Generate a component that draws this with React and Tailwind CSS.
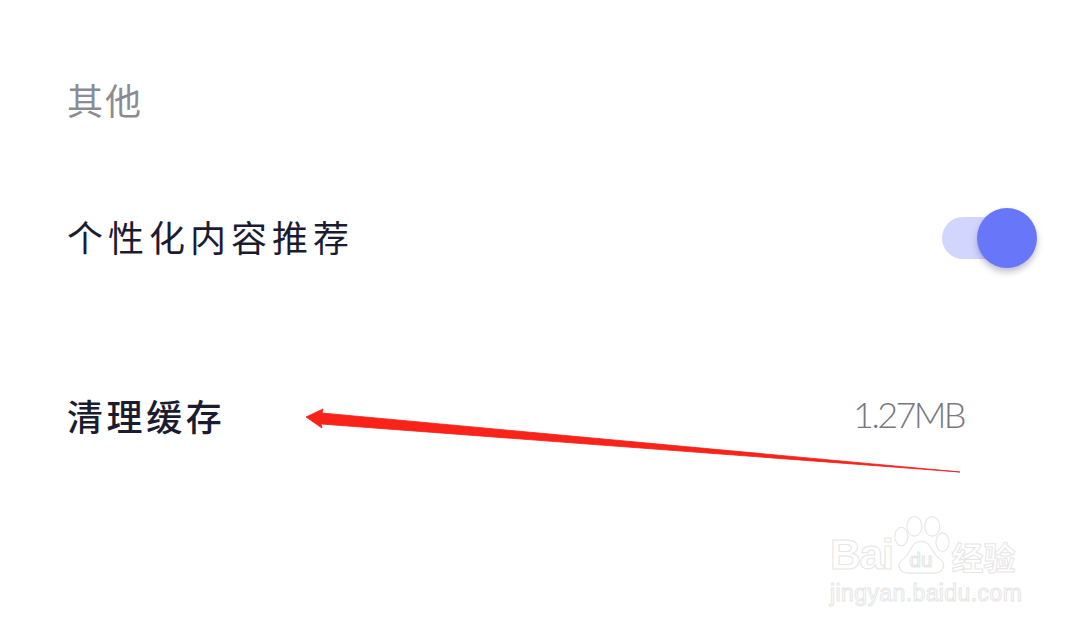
import React from "react";

const cjk = { fontFamily: '"Noto Sans CJK SC", "Noto Sans", sans-serif' };
const latin = { fontFamily: '"Liberation Sans", sans-serif' };

function Toggle() {
  return (
    <div className="flex items-center">
      <div className="w-[70px] h-[42px] rounded-full bg-[#d2d5fd]" />
      <div className="-ml-[35px] w-[60px] h-[60px] rounded-full bg-[#6877f9] shadow-[0_4px_6px_rgba(70,70,110,0.35)]" />
    </div>
  );
}

function Arrow() {
  return (
    <svg className="absolute left-0 top-0" width="1080" height="630" viewBox="0 0 1080 630">
      <path d="M306 417 L323 409 L322 413 L960 472 L321 424 L322 428 Z" fill="#f9231a" stroke="#f0201a" strokeWidth="0.8" />
    </svg>
  );
}

function Paw() {
  return (
    <svg width="58" height="62" viewBox="0 0 62 62" fill="#fff" stroke="#e6e6e6" strokeWidth="1.2" className="shrink-0">
      <ellipse cx="10" cy="22" rx="7" ry="10" />
      <ellipse cx="24" cy="11" rx="8" ry="10.5" />
      <ellipse cx="43" cy="11" rx="8" ry="10.5" />
      <ellipse cx="54" cy="28" rx="7" ry="10" />
      <path d="M31 27 C42 27 42 39 50 45 C60 52 54 61 45 61 L18 61 C8 61 3 52 13 45 C21 39 20 27 31 27 Z" />
      <text x="31" y="55" textAnchor="middle" fontSize="22" fontFamily="Liberation Sans, sans-serif">du</text>
    </svg>
  );
}

function Watermark() {
  return (
    <div className="absolute left-[830px] top-[514px] w-[194px] flex flex-col">
      <div className="flex items-end whitespace-nowrap">
        <span className="text-[43px] leading-[44px] font-bold tracking-[-1.5px] text-white [-webkit-text-stroke:1px_#e6e6e6]" style={latin}>
          Bai
        </span>
        <Paw />
        <span className="ml-[1px] text-[32px] leading-[40px] font-bold text-white [-webkit-text-stroke:1px_#e6e6e6]" style={cjk}>
          经验
        </span>
      </div>
      <span className="mt-[3px] text-[23px] leading-[28px] tracking-[0.4px] whitespace-nowrap text-white [-webkit-text-stroke:1px_#e6e6e6]" style={latin}>
        jingyan.baidu.com
      </span>
    </div>
  );
}

export default function App() {
  return (
    <div className="relative w-[1080px] h-[630px] overflow-hidden bg-white pl-[67px] pr-[43px] pt-[74px]" style={cjk}>
      <h3 className="h-[50px] text-[36px] leading-[50px] tracking-[2px] font-normal text-[#8b8b93]">其他</h3>
      <div className="mt-[84px] h-[60px] flex items-center justify-between">
        <span className="pb-[4px] text-[36px] tracking-[5px] text-[#1c1c30]">个性化内容推荐</span>
        <Toggle />
      </div>
      <div className="mt-[117px] h-[64px] flex items-center justify-between pr-[73px]">
        <span className="pb-[4px] text-[36px] tracking-[3.6px] font-medium text-[#1c1c30]">清理缓存</span>
        <span className="pb-[6px] text-[36px] tracking-[-2.6px] font-light text-[#77777d]" style={{ fontFamily: '"Lato", sans-serif' }}>1.27MB</span>
      </div>
      <Arrow />
      <Watermark />
    </div>
  );
}
